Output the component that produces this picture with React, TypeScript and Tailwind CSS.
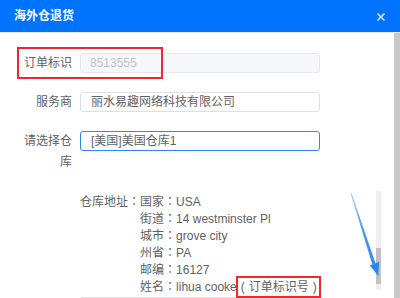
import React from 'react';

const font = { fontFamily: '"Liberation Sans", "Noto Sans CJK SC", sans-serif' };

const addressLines = [
  { k: '国家', v: 'USA' },
  { k: '街道', v: '14 westminster Pl' },
  { k: '城市', v: 'grove city' },
  { k: '州省', v: 'PA' },
  { k: '邮编', v: '16127' },
];

// centred full-width colon, as in the original UI font
const Colon = () => <span className="font-['Noto_Sans_CJK_TC',sans-serif]">：</span>;

const Paren = ({ c }: { c: string }) => (
  <span className="inline-block w-[12px] text-center">{c}</span>
);

const App = () => {
  return (
    <div
      className="w-[400px] h-[298px] overflow-hidden bg-white flex flex-col relative text-[12px] text-[#606266]"
      style={font}
    >
      <div className="h-[32px] shrink-0 bg-[#0073ff] flex items-center justify-between pl-[14px] pr-[14px]">
        <span className="text-white font-bold text-[12px] leading-[12px] -mt-[1px]">海外仓退货</span>
        <svg width="10" height="10" viewBox="0 0 10 10" className="mt-[1px]">
          <path d="M1.5 1.5 L8.5 8.5 M8.5 1.5 L1.5 8.5" stroke="#d6e8ff" strokeWidth="1.6" />
        </svg>
      </div>

      <div className="flex-1 flex border-t border-[#e6e6e6]">
        <div className="flex-1 flex flex-col pt-[20px]">
          {/* 订单标识 */}
          <div className="relative flex items-center pl-[20px] gap-[8px] h-[20px]">
            <div className="w-[52px] text-right leading-[20px] whitespace-nowrap">订单标识</div>
            <div className="w-[240px] h-[20px] rounded-[3px] border border-[#e4e7ed] bg-[#f5f7fa] pl-[9px] leading-[18px] text-[#c0c4cc]">
              8513555
            </div>
            <div className="absolute left-[17px] top-[-6px] w-[146px] h-[32px] border-2 border-[#f0282d]" />
          </div>

          {/* 服务商 */}
          <div className="flex items-center pl-[20px] gap-[8px] h-[20px] mt-[19px]">
            <div className="w-[52px] text-right leading-[20px]">服务商</div>
            <div className="w-[240px] h-[20px] rounded-[3px] border border-[#dcdfe6] bg-white pl-[10px] leading-[18px]">
              丽水易趣网络科技有限公司
            </div>
          </div>

          {/* 请选择仓库 */}
          <div className="flex items-start pl-[20px] gap-[8px] mt-[19px]">
            <div className="w-[52px] text-right leading-[21px]">请选择仓库</div>
            <div className="w-[240px] h-[20px] rounded-[3px] border border-[#2f86f6] bg-white pl-[10px] leading-[18px]">
              [美国]美国仓库1
            </div>
          </div>

          {/* 仓库地址 */}
          <div className="flex mt-[18px] h-[99px]">
            <div className="flex pl-[80px] pt-[2px] leading-[16px]">
              <div className="whitespace-nowrap">
                仓库地址<Colon />
              </div>
              <div className="flex flex-col">
                {addressLines.map((l) => (
                  <div key={l.k} className="whitespace-nowrap">
                    {l.k}
                    <Colon />
                    {l.v}
                  </div>
                ))}
                <div className="whitespace-nowrap">
                  姓名<Colon />lihua cooke
                  <span className="relative">
                    <Paren c="(" />订单标识号<Paren c=")" />
                    <span className="absolute left-[-1px] top-[-4px] w-[85px] h-[22px] border-2 border-[#f0282d]" />
                  </span>
                </div>
              </div>
            </div>
            <div className="ml-auto mr-[13px] w-[5px] bg-[#efefef] flex flex-col">
              <div className="mt-[57px] h-[36px] bg-[#c1c1c1]" />
            </div>
          </div>

          <div className="ml-[80px] mt-[7px] w-[240px] h-[20px] rounded-[3px] border border-[#dcdfe6]" />
        </div>
        <div className="w-[6px] bg-[#c8c8c8] shrink-0" />
      </div>

      <svg className="absolute left-0 top-0 pointer-events-none" width="400" height="298">
        <defs>
          <linearGradient id="ag" x1="351" y1="193" x2="378" y2="276" gradientUnits="userSpaceOnUse">
            <stop offset="0" stopColor="#9cc8f5" />
            <stop offset="0.5" stopColor="#4a98ec" />
            <stop offset="1" stopColor="#2f86ea" />
          </linearGradient>
        </defs>
        <polygon points="350.6,193.2 351.4,192.8 375.6,263.6 372.4,264.8" fill="url(#ag)" />
        <polygon points="378.3,276 369.8,265.4 379.2,261.8" fill="#2f86ea" />
      </svg>
    </div>
  );
};

export default App;
